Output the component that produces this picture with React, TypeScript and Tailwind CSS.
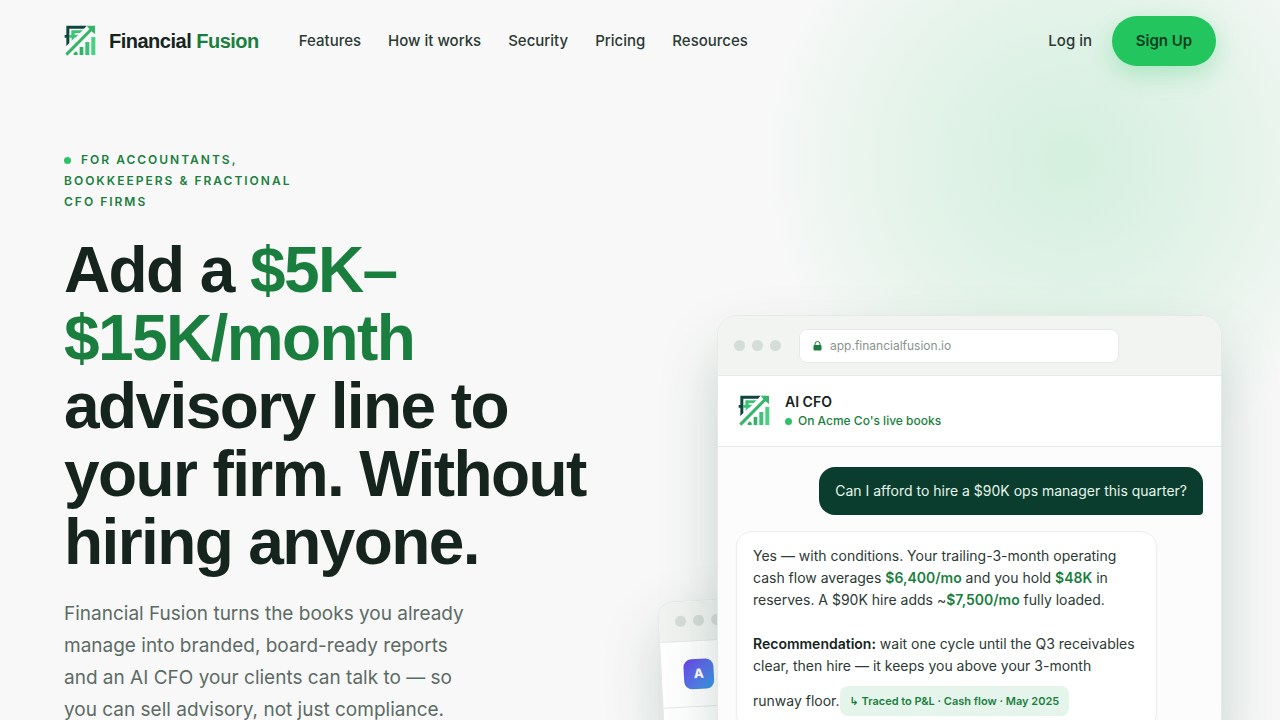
import React from 'react';

const navLinks = ['Features', 'How it works', 'Security', 'Pricing', 'Resources'];

const Logo: React.FC = () => (
    <svg viewBox="-3 0 96 96" className="w-8 h-8 shrink-0" aria-hidden="true">
        <defs>
            <linearGradient id="growth" x1="0" y1="0" x2="1" y2="0">
                <stop offset="0" stopColor="#2fae64" />
                <stop offset="1" stopColor="#4ed587" />
            </linearGradient>
        </defs>
        {/* Outer and inner F */}
        <path d="M4 2H65L57 11H13V54L4 63V38H-1V30H4Z" fill="#0c463c" />
        <path d="M19 16H53L45 24H29V29H40L31 38H29L20 47V38H12V30H19Z" fill="#3cc274" />
        {/* Arrow */}
        <path d="M4 89L80 12" stroke="#35b56a" strokeWidth="9" />
        <path d="M65 2H90V27L81 20L71 10Z" fill="#35b56a" />
        {/* Bars */}
        <path d="M26 90V85L33 79L38 84V90Z" fill="#2fae64" />
        <path d="M44 66H55V90H44ZM61 51H73V90H61ZM79 36H91V90H79Z" fill="url(#growth)" />
    </svg>
);

const WindowDots: React.FC = () => (
    <div className="flex gap-[7px]">
        <span className="w-[11px] h-[11px] rounded-full bg-[#d5ddd8]"></span>
        <span className="w-[11px] h-[11px] rounded-full bg-[#d5ddd8]"></span>
        <span className="w-[11px] h-[11px] rounded-full bg-[#d5ddd8]"></span>
    </div>
);

const Header: React.FC = () => (
    <header className="flex items-center justify-between px-16 py-4">
        <div className="flex items-center gap-10">
            <a href="#" className="flex items-center gap-[13px]">
                <Logo />
                <span className="font-['Liberation_Sans',sans-serif] text-xl font-bold tracking-tight">
                    Financial <span className="text-[#1a7f3e]">Fusion</span>
                </span>
            </a>
            <nav className="flex gap-[27px] text-[15px] font-medium text-[#2b3a34]">
                {navLinks.map((link) => (
                    <a key={link} href="#">{link}</a>
                ))}
            </nav>
        </div>
        <div className="flex items-center gap-5 text-[15px]">
            <a href="#" className="font-medium text-[#2b3a34]">Log in</a>
            <button className="h-[50px] w-[104px] rounded-full bg-[#22c55e] font-semibold text-[#0b3d1e] shadow-[0_8px_24px_rgba(34,197,94,0.28)]">
                Sign Up
            </button>
        </div>
    </header>
);

const HeroCopy: React.FC = () => (
    <div>
        <p className="text-[12px] leading-[21px] font-semibold tracking-[2px] uppercase text-[#1a7f3e]">
            <span className="inline-block w-[7px] h-[7px] mr-[10px] rounded-full bg-[#2fc169]"></span>
            For accountants,<br />
            bookkeepers &amp; fractional<br />
            CFO firms
        </p>
        <h1 className="mt-6 font-['Liberation_Sans',sans-serif] text-[64px] leading-[68px] font-bold tracking-tight whitespace-nowrap">
            Add a <span className="text-[#1a7f3e]">$5K–<br />$15K/month</span><br />
            advisory line to<br />
            your firm. Without<br />
            hiring anyone.
        </h1>
        <p className="mt-[22px] text-[19px] leading-8 text-[#5c6b64]">
            Financial Fusion turns the books you already<br />
            manage into branded, board-ready reports<br />
            and an AI CFO your clients can talk to — so<br />
            you can sell advisory, not just compliance.
        </p>
    </div>
);

const ClientWindow: React.FC = () => (
    <div className="absolute -left-[60px] top-[287px] w-[300px] h-[240px] origin-top-left -rotate-3 overflow-hidden rounded-2xl border border-[#e6eae7] bg-white shadow-[0_24px_60px_rgba(11,61,46,0.18)]">
        <div className="flex items-center h-10 px-4 border-b border-[#e6eae7] bg-[#f1f3f1]">
            <WindowDots />
        </div>
        <div className="flex items-center h-[66px] px-[22px] border-b border-[#e6eae7]">
            <span className="flex items-center justify-center w-[30px] h-[30px] rounded-lg bg-linear-to-br from-[#6a3de8] to-[#2d9be8] text-[13px] font-extrabold text-white">
                A
            </span>
        </div>
    </div>
);

const ChatWindow: React.FC = () => (
    <div className="relative overflow-hidden rounded-[20px] border border-[#e6eae7] bg-[#fcfcfc] shadow-[0_30px_64px_-8px_rgba(11,61,46,0.26)]">
        <div className="flex items-center gap-[18px] h-[60px] px-4 border-b border-[#e6eae7] bg-[#f2f4f2]">
            <WindowDots />
            <div className="flex items-center gap-2 w-80 h-[34px] px-[13px] rounded-lg border border-[#e6eae7] bg-white text-xs text-[#87938d]">
                <svg viewBox="0 0 9 10" className="w-[9px] h-[10px]" aria-hidden="true">
                    <path d="M2 5V3a2.5 2.5 0 0 1 5 0v2" fill="none" stroke="#1a7f3e" />
                    <rect x="0.5" y="4" width="8" height="5.5" rx="1" fill="#1a7f3e" />
                </svg>
                app.financialfusion.io
            </div>
        </div>
        <div className="flex items-center gap-[15px] h-[71px] px-5 border-b border-[#e6eae7] bg-white">
            <Logo />
            <div>
                <div className="text-[14px] leading-5 font-semibold">AI CFO</div>
                <div className="flex items-center gap-[6px] text-[12px] leading-[18px] font-medium text-[#1a7f3e]">
                    <span className="w-[7px] h-[7px] rounded-full bg-[#2fc169]"></span>
                    On Acme Co's live books
                </div>
            </div>
        </div>
        <div className="flex flex-col gap-4 px-[18px] py-5 text-[14px] leading-[22px]">
            <div className="self-end px-4 py-[13px] rounded-2xl rounded-br-[4px] bg-[#0b3d2e] text-[#e3f5ea] whitespace-nowrap">
                Can I afford to hire a $90K ops manager this quarter?
            </div>
            <div className="w-[421px] px-4 py-[13px] rounded-2xl border border-[#eceeed] bg-white text-[#2b3a34] whitespace-nowrap shadow-xs">
                Yes — with conditions. Your trailing-3-month operating<br />
                cash flow averages <b className="font-semibold text-[#1a7f3e]">$6,400/mo</b> and you hold <b className="font-semibold text-[#1a7f3e]">$48K</b> in<br />
                reserves. A $90K hire adds ~<b className="font-semibold text-[#1a7f3e]">$7,500/mo</b> fully loaded.
                <br /><br />
                <b className="font-semibold text-[#16241e]">Recommendation:</b> wait one cycle until the Q3 receivables<br />
                clear, then hire — it keeps you above your 3-month<br />
                <span className="inline-flex items-center mt-[9px]">
                    runway floor.
                    <span className="h-[30px] px-[10px] rounded-lg bg-[#e6f5ec] text-[11px] leading-[30px] font-semibold text-[#1a7f3e]">
                        <span className="font-['DejaVu_Sans',sans-serif]">↳</span> Traced to P&amp;L · Cash flow · May 2025
                    </span>
                </span>
            </div>
        </div>
    </div>
);

const App: React.FC = () => (
    <div className="relative min-h-screen overflow-hidden bg-[#f8f8f8] font-['Inter',sans-serif] text-[#16241e]">
        {/* Soft green glow in the top right corner */}
        <div className="pointer-events-none absolute -right-[140px] -top-[190px] w-[700px] h-[700px] bg-[radial-gradient(circle_closest-side,rgba(34,197,94,0.17),rgba(34,197,94,0.08)_55%,transparent_88%)]"></div>
        <div className="relative">
            <Header />
            <main className="grid grid-cols-[minmax(0,1fr)_505px] items-start pl-16 pr-[58px] pt-[67px] pb-16">
                <HeroCopy />
                <div className="relative mt-[166px]">
                    <ClientWindow />
                    <ChatWindow />
                </div>
            </main>
        </div>
    </div>
);

export default App;
